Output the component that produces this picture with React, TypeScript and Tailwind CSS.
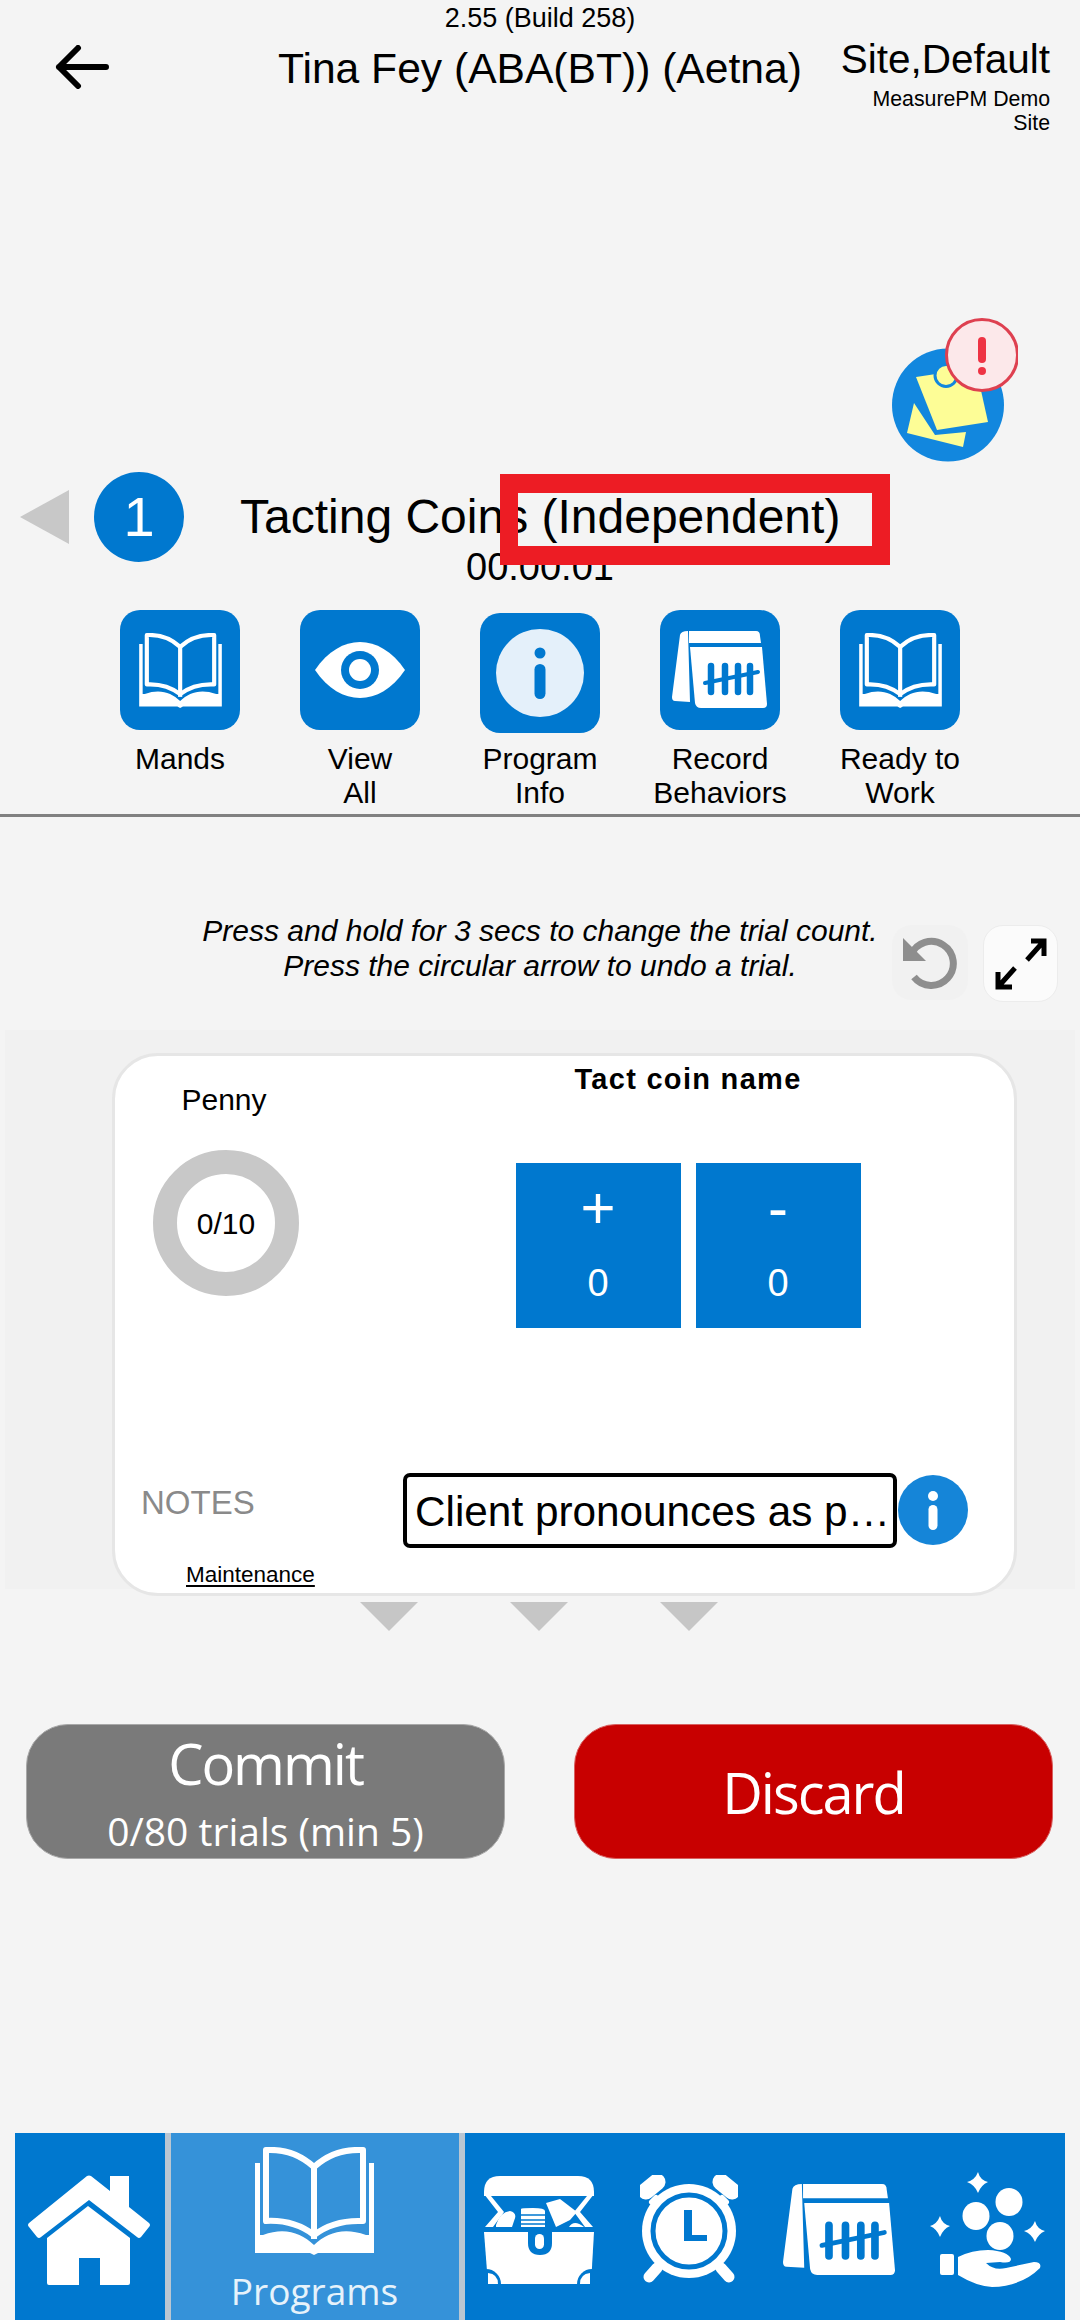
import React from 'react';

const BLUE = '#0078cf';

const BookIcon = ({ className }: { className: string }) => (
  <svg viewBox="0 0 119 108" className={className}>
    <path d="M11 3C30 2 46 8 59 20C72 8 88 2 108 3V74C88 73 72 78 59 88C46 78 30 73 11 74Z" fill="none" stroke="#fff" strokeWidth="6" strokeLinejoin="round" />
    <path d="M59 20V92" stroke="#fff" strokeWidth="6" />
    <path d="M0 16H5V88H8C30 80 46 86 59 98C72 86 88 80 111 88H114V16H119V106H63L59 108L55 106H0Z" fill="#fff" />
  </svg>
);

const EyeIcon = () => (
  <svg viewBox="0 0 120 120" className="w-[120px] h-[120px]">
    <path d="M15 60C28 41 44 32 60 32C76 32 92 41 105 60C92 79 76 88 60 88C44 88 28 79 15 60Z" fill="#fff" />
    <circle cx="60" cy="60" r="19" fill={BLUE} />
    <circle cx="60" cy="60" r="11" fill="#fff" />
  </svg>
);

const InfoIcon = () => (
  <svg viewBox="0 0 120 120" className="w-[120px] h-[120px]">
    <circle cx="60" cy="60" r="44" fill="#e4f0fa" />
    <circle cx="60" cy="40" r="5.5" fill={BLUE} />
    <rect x="54.5" y="51" width="11" height="35" rx="5.5" fill={BLUE} />
  </svg>
);

const TallyPaths = () => (
  <>
    <path d="M12 87L20 25Q21 21 28 21L30 92L15 91Q12 91 12 87Z" fill="#fff" />
    <path d="M29 21H96Q100 21 100 26L101 33H29Z" fill="#fff" />
    <path d="M30 37H102L107 94Q107 98 103 98H41Q36 98 35 93Z" fill="#fff" />
    <g stroke={BLUE} strokeWidth="6.5" strokeLinecap="round">
      <path d="M51 56V82M65 56V82M78 56V82M90 56V82" />
    </g>
    <path d="M45 73L98 62" stroke={BLUE} strokeWidth="4" strokeLinecap="round" />
  </>
);

const TallyIcon = () => (
  <svg viewBox="0 0 120 120" className="w-[120px] h-[120px]">
    <TallyPaths />
  </svg>
);

const HomeIcon = () => (
  <svg viewBox="0 0 122 110" className="w-[122px] h-[110px]">
    <path d="M59 1Q61 0 63 1L82 16V1H101V32L121 48Q123 50 121 52L113 62Q111 64 109 62L61 25L13 62Q11 64 9 62L1 52Q-1 50 1 48Z" fill="#fff" />
    <path d="M60 31L102 63V108Q102 110 100 110H72V83H51V110H21Q19 110 19 108V63Z" fill="#fff" />
  </svg>
);

const ChestIcon = () => (
  <svg viewBox="0 0 110 108" className="w-[110px] h-[108px]">
    <path d="M0 16Q0 0 16 0H94Q110 0 110 16V20H0Z" fill="#fff" />
    <path d="M0 18L7 20L20 36L9 51H1L14 36Z" fill="#fff" />
    <path d="M110 18L103 20L90 36L101 51H109L96 36Z" fill="#fff" />
    <path d="M12 49Q16 36 26 35Q34 37 30 45L28 51H12Z" fill="#fff" />
    <path d="M37 33Q37 32 49 32Q61 32 61 35V51H37Z" fill="#fff" />
    <path d="M37 39H61M37 44H61M37 48H61" stroke={BLUE} strokeWidth="1.5" />
    <path d="M62 27L76 23L93 36L86 44L72 51Z" fill="#fff" />
    <path d="M85 51Q90 43 100 51Z" fill="#fff" />
    <path d="M0 56H110L107 108H4Z" fill="#fff" />
    <circle cx="2" cy="108" r="15" fill={BLUE} />
    <circle cx="108" cy="108" r="15" fill={BLUE} />
    <path d="M4 108V97Q14 98 14 108Z" fill="#fff" />
    <path d="M106 108V97Q96 98 96 108Z" fill="#fff" />
    <path d="M44 56H68V67Q68 79 56 79Q44 79 44 67Z" fill={BLUE} />
    <rect x="51" y="58" width="9" height="15" rx="4.5" fill="#fff" />
  </svg>
);

const ClockIcon = () => (
  <svg viewBox="0 0 98 110" className="w-[98px] h-[110px]">
    <g stroke="#fff" strokeWidth="13" strokeLinecap="round">
      <path d="M6 16L17 7M92 16L81 7" strokeWidth="17" />
      <path d="M12 27L16 23M86 27L82 23" strokeWidth="6" />
      <path d="M9 102L17 93M89 102L81 93" strokeWidth="11" />
    </g>
    <circle cx="49" cy="56" r="47" fill="#fff" />
    <circle cx="49" cy="56" r="36" fill="#fff" stroke={BLUE} strokeWidth="5" />
    <path d="M44 35H52V60H67V66H44Z" fill={BLUE} />
  </svg>
);

const CoinsHandIcon = () => (
  <svg viewBox="0 0 118 115" className="w-[118px] h-[115px]">
    <g fill="#fff">
      <path d="M48 0Q50 8 58 10Q51 13 48 21Q45 13 37 10Q45 8 48 0Z" />
      <path d="M10 44Q12 52 20 54Q13 57 10 65Q7 57 0 54Q7 52 10 44Z" />
      <path d="M105 49Q107 57 115 59Q108 62 105 70Q102 62 94 59Q102 57 105 49Z" />
      <ellipse cx="79" cy="30" rx="13.5" ry="14" />
      <ellipse cx="46" cy="44" rx="13.5" ry="14" />
      <ellipse cx="70" cy="64" rx="13.5" ry="14" />
      <rect x="10" y="82" width="14" height="21" rx="2" />
      <path d="M28 85Q42 78 58 78Q78 79 81 87Q81 92 70 90L56 91Q64 99 76 96L104 90Q112 90 110 96Q92 114 62 115Q46 114 28 103Z" />
    </g>
  </svg>
);

const UndoIcon = () => (
  <svg viewBox="0 0 56 56" className="w-[56px] h-[56px]">
    <path d="M9 20A22 22 0 1 1 12 42" fill="none" stroke="#8e8e8e" strokeWidth="7" />
    <path d="M1 3V26H24Z" fill="#8e8e8e" />
  </svg>
);

const ExpandIcon = () => (
  <svg viewBox="0 0 56 56" className="w-[56px] h-[56px]" fill="none" stroke="#000" strokeWidth="5">
    <path d="M38 5H51V20M51 5L34 24" />
    <path d="M5 36V51H19M5 51L22 32" />
  </svg>
);

const StickyBadge = () => (
  <svg viewBox="0 0 126 144" className="w-[126px] h-[144px]">
    <ellipse cx="56" cy="87" rx="56" ry="56.5" fill="#1287de" />
    <path d="M22 85L15 115L71 129L74 114L43 117Z" fill="#fdfd96" />
    <path d="M24 59L84 50L96 104L45 112Z" fill="#fdfd96" />
    <circle cx="54" cy="57.5" r="11" fill="#fdfd96" stroke="#1287de" strokeWidth="3" />
    <circle cx="90" cy="37" r="35.5" fill="#fce8ea" stroke="#de4050" strokeWidth="3" />
    <rect x="86" y="19" width="8" height="26" rx="4" fill="#ee3344" />
    <circle cx="90" cy="53" r="4" fill="#ee3344" />
  </svg>
);

const actions = [
  { icon: <BookIcon className="w-[83px] h-[75px]" />, label: ['Mands'] },
  { icon: <EyeIcon />, label: ['View', 'All'] },
  { icon: <InfoIcon />, label: ['Program', 'Info'], low: true },
  { icon: <TallyIcon />, label: ['Record', 'Behaviors'] },
  { icon: <BookIcon className="w-[83px] h-[75px]" />, label: ['Ready to', 'Work'] },
];

const App = () => {
  return (
    <div className="relative w-[1080px] h-[2320px] overflow-hidden bg-[#f4f4f4] text-black flex flex-col font-['Liberation_Sans',Arial,sans-serif]">
      <div className="h-[36px] leading-[36px] text-[27px] text-center">2.55 (Build 258)</div>

      <div className="flex items-start h-[282px]">
        <svg viewBox="0 0 54 44" className="w-[54px] h-[44px] ml-[55px] mt-[9px]" fill="none" stroke="#000" strokeWidth="6" strokeLinecap="round" strokeLinejoin="round">
          <path d="M51 22H4M23 3L4 22L23 41" />
        </svg>
        <div className="ml-[169px] mt-[8px] text-[42.6px] leading-[48px] whitespace-nowrap">Tina Fey (ABA(BT)) (Aetna)</div>
        <div className="ml-auto mr-[30px] w-[212px] text-right">
          <div className="text-[40.5px] leading-[46px] whitespace-nowrap">Site,Default</div>
          <div className="text-[21.3px] leading-[24px] mt-[5px] pl-[10px]">MeasurePM Demo Site</div>
        </div>
      </div>

      <div className="flex justify-start pl-[892px] h-[154px]">
        <StickyBadge />
      </div>

      <div className="flex items-center h-[90px]">
        <svg viewBox="0 0 49 54" className="w-[49px] h-[54px] ml-[20px]">
          <path d="M49 0V54L0 27Z" fill="#c8c8c8" />
        </svg>
        <div className="ml-[25px] w-[90px] h-[90px] rounded-full bg-[#0078cf] text-white text-[56px] flex items-center justify-center">1</div>
        <div className="ml-[56px] text-[48px] leading-[56px] whitespace-nowrap">Tacting Coins (Independent)</div>
      </div>
      <div className="text-[38px] leading-[44px] text-center -mt-[17px]">00:00:01</div>

      {/* annotation frame sits over the title */}
      <div className="absolute left-[500px] top-[474px] w-[390px] h-[91px] border-x-[18px] border-y-[19px] border-[#ed1c24]" />

      <div className="flex pl-[90px] mt-[21px] h-[207px] border-b-[3px] border-[#808080]">
        {actions.map((a) => (
          <div key={a.label[0]} className="w-[180px] flex flex-col items-center">
            <div className="h-[132px]">
              <div className={`w-[120px] h-[120px] rounded-[20px] bg-[#0078cf] flex items-center justify-center ${a.low ? 'mt-[3px]' : ''}`}>
                {a.icon}
              </div>
            </div>
            <div className="text-[30px] leading-[34px] text-center whitespace-nowrap">
              {a.label.map((l) => (
                <div key={l}>{l}</div>
              ))}
            </div>
          </div>
        ))}
      </div>

      <div className="flex items-start mt-[108px] h-[105px]">
        <div className="ml-[184px] w-[712px] text-[30px] leading-[35px] italic text-center whitespace-nowrap -mt-[12px]">
          <div>Press and hold for 3 secs to change the trial count.</div>
          <div>Press the circular arrow to undo a trial.</div>
        </div>
        <div className="-ml-[4px] w-[76px] h-[75px] rounded-[20px] bg-[#f1f1f1] flex items-center justify-center">
          <UndoIcon />
        </div>
        <div className="ml-[15px] w-[75px] h-[77px] rounded-[20px] bg-[#fbfbfb] border border-[#ececec] flex items-center justify-center">
          <ExpandIcon />
        </div>
      </div>

      <div className="mx-[5px] h-[559px] bg-[#f1f1f1] pt-[23px] pl-[107px]">
        <div className="w-[905px] h-[543px] rounded-[46px] bg-white border-[3px] border-[#e6e6e6] flex flex-col">
          <div className="flex h-[417px]">
            <div className="w-[218px] flex flex-col items-center">
              <div className="text-[30px] leading-[34px] mt-[27px]">Penny</div>
              <div className="mt-[33px] ml-[4px] w-[146px] h-[146px] rounded-full border-[24px] border-[#c8c8c8] flex items-center justify-center text-[30px]">0/10</div>
            </div>
            <div className="ml-[155px] w-[400px] flex flex-col items-center">
              <div className="text-[29px] leading-[34px] font-bold tracking-[1.3px] mt-[6px]">Tact coin name</div>
              <div className="flex gap-[15px] mt-[67px] text-white">
                <div className="w-[165px] h-[165px] bg-[#0078cf] flex flex-col items-center">
                  <div className="text-[60px] leading-[70px] mt-[10px]">+</div>
                  <div className="text-[38px] leading-[44px] mt-[18px]">0</div>
                </div>
                <div className="w-[165px] h-[165px] bg-[#0078cf] flex flex-col items-center">
                  <div className="text-[60px] leading-[70px] mt-[10px]">-</div>
                  <div className="text-[38px] leading-[44px] mt-[18px]">0</div>
                </div>
              </div>
            </div>
          </div>
          <div className="flex items-start h-[80px]">
            <div className="ml-[26px] mt-[10px] w-[262px] text-[33px] leading-[40px] text-[#8a8a8a]">NOTES</div>
            <div className="w-[494px] h-[75px] border-[4px] border-black rounded-[7px] bg-white text-[42.3px] leading-[70px] px-[8px] whitespace-nowrap">Client pronounces as p…</div>
            <svg viewBox="0 0 70 70" className="w-[70px] h-[70px] ml-[1px] mt-[2px]">
              <circle cx="35" cy="35" r="35" fill="#1585d8" />
              <circle cx="35" cy="21" r="5" fill="#fff" />
              <rect x="30.5" y="30" width="9" height="25" rx="4.5" fill="#fff" />
            </svg>
          </div>
          <div className="ml-[71px] mt-[8px] text-[22.5px] leading-[28px] underline underline-offset-[3px]">Maintenance</div>
        </div>
      </div>

      <div className="flex pl-[360px] gap-[92px] mt-[13px]">
        {[0, 1, 2].map((i) => (
          <svg key={i} viewBox="0 0 58 29" className="w-[58px] h-[29px]">
            <path d="M0 0H58L29 29Z" fill="#c6c6c6" />
          </svg>
        ))}
      </div>

      <div className="flex pl-[26px] gap-[69px] mt-[93px] font-['Open_Sans',sans-serif] text-white">
        <div className="w-[479px] h-[135px] rounded-[42px] bg-[#7a7a7a] border border-[#a8a8a8] flex flex-col items-center">
          <div className="text-[56px] leading-[72px] tracking-[-2px] mt-[2px]">Commit</div>
          <div className="text-[39px] leading-[50px] mt-[7px]">0/80 trials (min 5)</div>
        </div>
        <div className="w-[479px] h-[135px] rounded-[42px] bg-[#c80000] border border-[#d86060] flex items-center justify-center text-[56px] tracking-[-2px]">Discard</div>
      </div>

      <div className="mt-auto h-[187px] mx-[15px] flex bg-[#0078cf] text-white">
        <div className="w-[150px] flex items-center justify-center pt-[6px] pr-[2px]">
          <HomeIcon />
        </div>
        <div className="w-[6px] bg-[#b9c6d2]" />
        <div className="w-[288px] bg-[#3592d9] flex flex-col items-center pt-[14px] pr-[1px]">
          <BookIcon className="w-[119px] h-[108px]" />
          <div className="text-[37px] leading-[50px] mt-[11px] text-[#e6f2fb] font-['Open_Sans',sans-serif]">Programs</div>
        </div>
        <div className="w-[6px] bg-[#b9c6d2]" />
        <div className="flex-1 flex items-center pl-[19px] pt-[6px]">
          <ChestIcon />
          <div className="ml-[46px]"><ClockIcon /></div>
          <svg viewBox="12 21 95 77" className="ml-[45px] w-[112px] h-[91px]">
            <TallyPaths />
          </svg>
          <div className="ml-[35px]"><CoinsHandIcon /></div>
        </div>
      </div>
    </div>
  );
};

export default App;
